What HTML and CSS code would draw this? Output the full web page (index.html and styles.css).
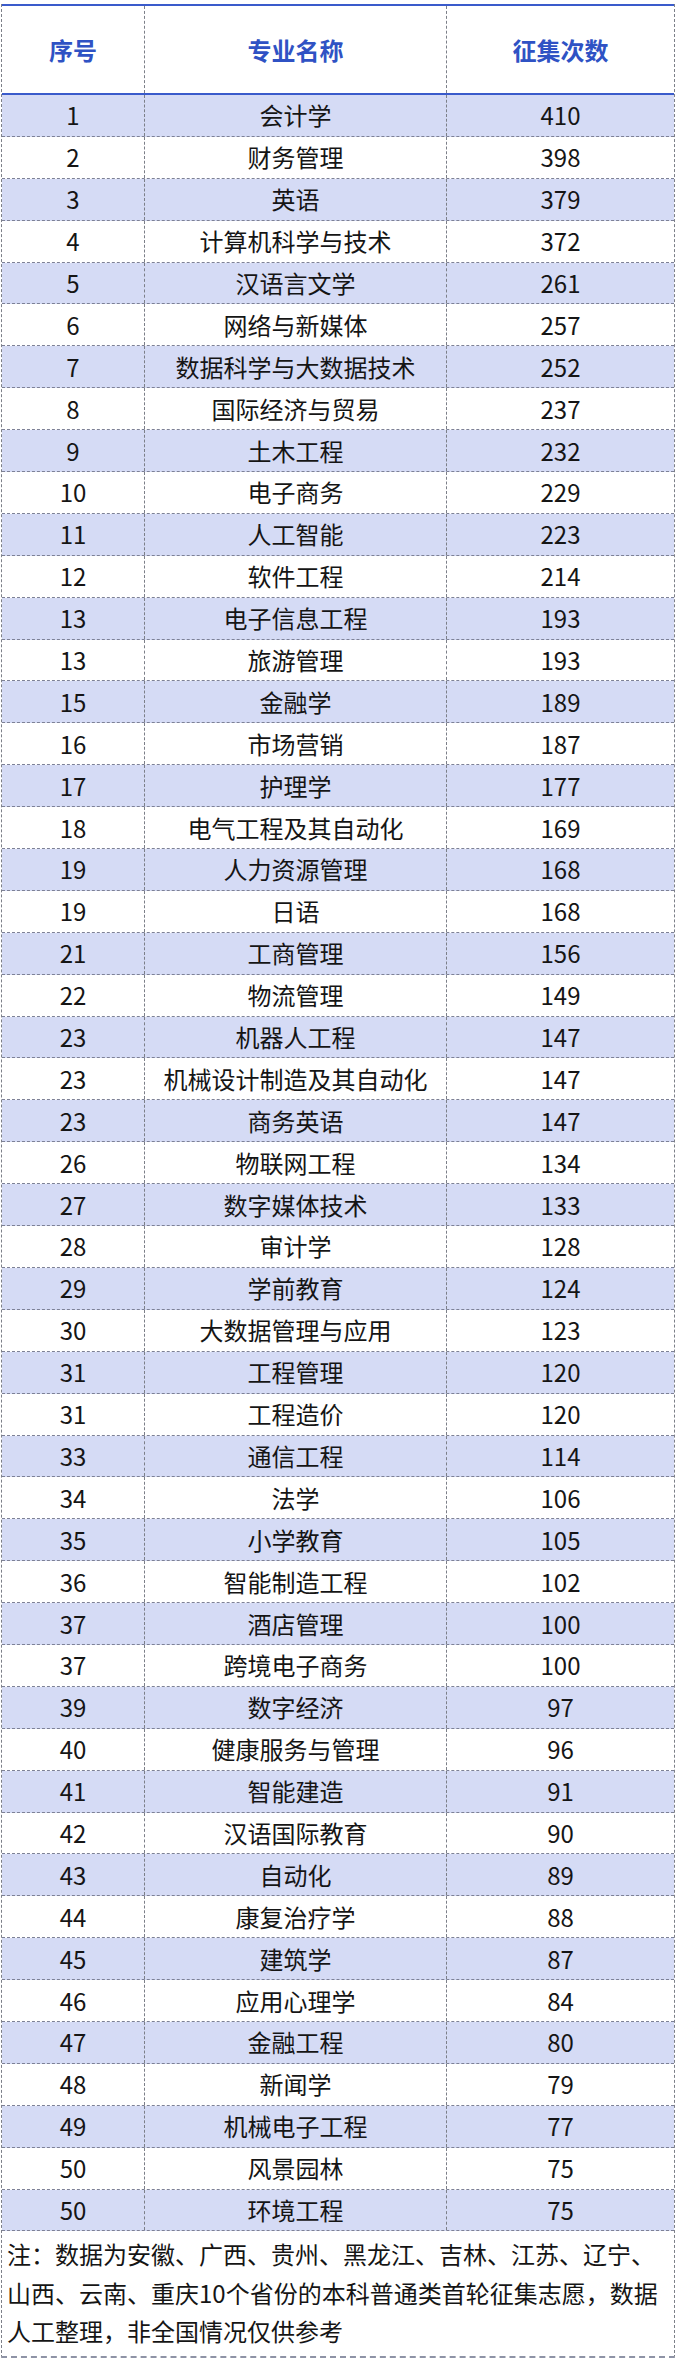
FILE: index.html
```html
<!DOCTYPE html>
<html lang="zh-CN">
<head>
<meta charset="utf-8">
<title>征集志愿专业统计</title>
<link rel="stylesheet" href="styles.css">
</head>
<body>
<div class="sheet">
  <div class="head">
    <div class="cell">序号</div>
    <div class="cell">专业名称</div>
    <div class="cell">征集次数</div>
  </div>
  <div class="body">
    <div class="row"><div class="cell">1</div><div class="cell">会计学</div><div class="cell">410</div></div>
    <div class="row"><div class="cell">2</div><div class="cell">财务管理</div><div class="cell">398</div></div>
    <div class="row"><div class="cell">3</div><div class="cell">英语</div><div class="cell">379</div></div>
    <div class="row"><div class="cell">4</div><div class="cell">计算机科学与技术</div><div class="cell">372</div></div>
    <div class="row"><div class="cell">5</div><div class="cell">汉语言文学</div><div class="cell">261</div></div>
    <div class="row"><div class="cell">6</div><div class="cell">网络与新媒体</div><div class="cell">257</div></div>
    <div class="row"><div class="cell">7</div><div class="cell">数据科学与大数据技术</div><div class="cell">252</div></div>
    <div class="row"><div class="cell">8</div><div class="cell">国际经济与贸易</div><div class="cell">237</div></div>
    <div class="row"><div class="cell">9</div><div class="cell">土木工程</div><div class="cell">232</div></div>
    <div class="row"><div class="cell">10</div><div class="cell">电子商务</div><div class="cell">229</div></div>
    <div class="row"><div class="cell">11</div><div class="cell">人工智能</div><div class="cell">223</div></div>
    <div class="row"><div class="cell">12</div><div class="cell">软件工程</div><div class="cell">214</div></div>
    <div class="row"><div class="cell">13</div><div class="cell">电子信息工程</div><div class="cell">193</div></div>
    <div class="row"><div class="cell">13</div><div class="cell">旅游管理</div><div class="cell">193</div></div>
    <div class="row"><div class="cell">15</div><div class="cell">金融学</div><div class="cell">189</div></div>
    <div class="row"><div class="cell">16</div><div class="cell">市场营销</div><div class="cell">187</div></div>
    <div class="row"><div class="cell">17</div><div class="cell">护理学</div><div class="cell">177</div></div>
    <div class="row"><div class="cell">18</div><div class="cell">电气工程及其自动化</div><div class="cell">169</div></div>
    <div class="row"><div class="cell">19</div><div class="cell">人力资源管理</div><div class="cell">168</div></div>
    <div class="row"><div class="cell">19</div><div class="cell">日语</div><div class="cell">168</div></div>
    <div class="row"><div class="cell">21</div><div class="cell">工商管理</div><div class="cell">156</div></div>
    <div class="row"><div class="cell">22</div><div class="cell">物流管理</div><div class="cell">149</div></div>
    <div class="row"><div class="cell">23</div><div class="cell">机器人工程</div><div class="cell">147</div></div>
    <div class="row"><div class="cell">23</div><div class="cell">机械设计制造及其自动化</div><div class="cell">147</div></div>
    <div class="row"><div class="cell">23</div><div class="cell">商务英语</div><div class="cell">147</div></div>
    <div class="row"><div class="cell">26</div><div class="cell">物联网工程</div><div class="cell">134</div></div>
    <div class="row"><div class="cell">27</div><div class="cell">数字媒体技术</div><div class="cell">133</div></div>
    <div class="row"><div class="cell">28</div><div class="cell">审计学</div><div class="cell">128</div></div>
    <div class="row"><div class="cell">29</div><div class="cell">学前教育</div><div class="cell">124</div></div>
    <div class="row"><div class="cell">30</div><div class="cell">大数据管理与应用</div><div class="cell">123</div></div>
    <div class="row"><div class="cell">31</div><div class="cell">工程管理</div><div class="cell">120</div></div>
    <div class="row"><div class="cell">31</div><div class="cell">工程造价</div><div class="cell">120</div></div>
    <div class="row"><div class="cell">33</div><div class="cell">通信工程</div><div class="cell">114</div></div>
    <div class="row"><div class="cell">34</div><div class="cell">法学</div><div class="cell">106</div></div>
    <div class="row"><div class="cell">35</div><div class="cell">小学教育</div><div class="cell">105</div></div>
    <div class="row"><div class="cell">36</div><div class="cell">智能制造工程</div><div class="cell">102</div></div>
    <div class="row"><div class="cell">37</div><div class="cell">酒店管理</div><div class="cell">100</div></div>
    <div class="row"><div class="cell">37</div><div class="cell">跨境电子商务</div><div class="cell">100</div></div>
    <div class="row"><div class="cell">39</div><div class="cell">数字经济</div><div class="cell">97</div></div>
    <div class="row"><div class="cell">40</div><div class="cell">健康服务与管理</div><div class="cell">96</div></div>
    <div class="row"><div class="cell">41</div><div class="cell">智能建造</div><div class="cell">91</div></div>
    <div class="row"><div class="cell">42</div><div class="cell">汉语国际教育</div><div class="cell">90</div></div>
    <div class="row"><div class="cell">43</div><div class="cell">自动化</div><div class="cell">89</div></div>
    <div class="row"><div class="cell">44</div><div class="cell">康复治疗学</div><div class="cell">88</div></div>
    <div class="row"><div class="cell">45</div><div class="cell">建筑学</div><div class="cell">87</div></div>
    <div class="row"><div class="cell">46</div><div class="cell">应用心理学</div><div class="cell">84</div></div>
    <div class="row"><div class="cell">47</div><div class="cell">金融工程</div><div class="cell">80</div></div>
    <div class="row"><div class="cell">48</div><div class="cell">新闻学</div><div class="cell">79</div></div>
    <div class="row"><div class="cell">49</div><div class="cell">机械电子工程</div><div class="cell">77</div></div>
    <div class="row"><div class="cell">50</div><div class="cell">风景园林</div><div class="cell">75</div></div>
    <div class="row"><div class="cell">50</div><div class="cell">环境工程</div><div class="cell">75</div></div>
  </div>
  <div class="note">注：数据为安徽、广西、贵州、黑龙江、吉林、江苏、辽宁、山西、云南、重庆10个省份的本科普通类首轮征集志愿，数据人工整理，非全国情况仅供参考</div>
</div>
</body>
</html>
```
FILE: styles.css
```css
html, body {
  margin: 0;
  padding: 0;
  background: #ffffff;
}

body {
  font-family: "Noto Sans CJK SC", "Noto Sans", sans-serif;
  color: #1c1c1c;
}

.sheet {
  box-sizing: border-box;
  width: 674px;
  margin: 4px 0 0 1px;
  border-left: 1px dashed #7c7f88;
  border-right: 1px dashed #7c7f88;
  border-bottom: 2px dashed #8e93a6;
}

.head,
.row {
  display: grid;
  grid-template-columns: 143px 302px 1fr;
}

.head {
  height: 91px;
  box-sizing: border-box;
  border-top: 2px solid #3a5bcb;
  border-bottom: 2px solid #3a5bcb;
  color: #2f52c4;
  font-weight: 700;
  font-size: 24px;
}

.cell {
  display: flex;
  align-items: center;
  justify-content: center;
  white-space: nowrap;
}

.head .cell:not(:last-child),
.row .cell:not(:last-child) {
  border-right: 1px dashed #7c7f88;
}

.row {
  height: 41.9px;
  box-sizing: border-box;
  border-bottom: 1px dashed #7d8196;
  font-size: 24px;
  line-height: 1;
  color: #151515;
}

.row:nth-child(odd) {
  background: #d5dbf5;
}

.note {
  padding: 4px 8px 5px 5px;
  font-size: 24px;
  line-height: 38.5px;
  color: #151515;
}
```
